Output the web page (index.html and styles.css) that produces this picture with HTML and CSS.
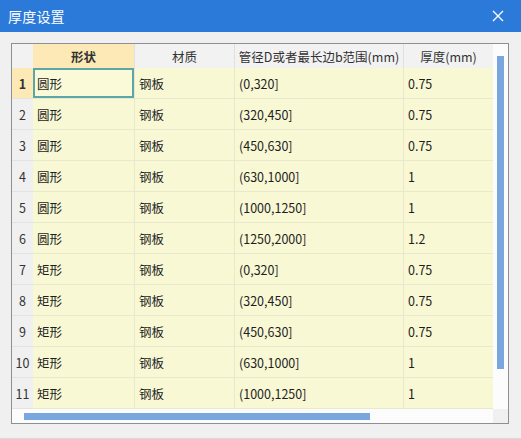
FILE: index.html
```html
<!DOCTYPE html>
<html lang="zh">
<head>
<meta charset="utf-8">
<title>厚度设置</title>
<link rel="stylesheet" href="styles.css">
</head>
<body>
<div class="window">
  <div class="titlebar">
    <span class="title">厚度设置</span>
    <svg class="close" width="12" height="12" viewBox="0 0 12 12"><path d="M1 1L11 11M11 1L1 11" stroke="#fff" stroke-width="1.4" fill="none"/></svg>
  </div>
  <div class="content">
    <div class="frame">
      <div class="main">
        <div class="row head">
          <div class="c rn"></div>
          <div class="c c1 hl bold">形状</div>
          <div class="c c2">材质</div>
          <div class="c c3">管径D或者最长边b范围(mm)</div>
          <div class="c c4">厚度(mm)</div>
        </div>
        <div class="row"><div class="c rn hl bold">1</div><div class="c c1 sel">圆形</div><div class="c c2">钢板</div><div class="c c3">(0,320]</div><div class="c c4">0.75</div></div>
        <div class="row"><div class="c rn">2</div><div class="c c1">圆形</div><div class="c c2">钢板</div><div class="c c3">(320,450]</div><div class="c c4">0.75</div></div>
        <div class="row"><div class="c rn">3</div><div class="c c1">圆形</div><div class="c c2">钢板</div><div class="c c3">(450,630]</div><div class="c c4">0.75</div></div>
        <div class="row"><div class="c rn">4</div><div class="c c1">圆形</div><div class="c c2">钢板</div><div class="c c3">(630,1000]</div><div class="c c4">1</div></div>
        <div class="row"><div class="c rn">5</div><div class="c c1">圆形</div><div class="c c2">钢板</div><div class="c c3">(1000,1250]</div><div class="c c4">1</div></div>
        <div class="row"><div class="c rn">6</div><div class="c c1">圆形</div><div class="c c2">钢板</div><div class="c c3">(1250,2000]</div><div class="c c4">1.2</div></div>
        <div class="row"><div class="c rn">7</div><div class="c c1">矩形</div><div class="c c2">钢板</div><div class="c c3">(0,320]</div><div class="c c4">0.75</div></div>
        <div class="row"><div class="c rn">8</div><div class="c c1">矩形</div><div class="c c2">钢板</div><div class="c c3">(320,450]</div><div class="c c4">0.75</div></div>
        <div class="row"><div class="c rn">9</div><div class="c c1">矩形</div><div class="c c2">钢板</div><div class="c c3">(450,630]</div><div class="c c4">0.75</div></div>
        <div class="row"><div class="c rn">10</div><div class="c c1">矩形</div><div class="c c2">钢板</div><div class="c c3">(630,1000]</div><div class="c c4">1</div></div>
        <div class="row"><div class="c rn">11</div><div class="c c1">矩形</div><div class="c c2">钢板</div><div class="c c3">(1000,1250]</div><div class="c c4">1</div></div>
      </div>
      <div class="vscroll"><div class="vthumb"></div></div>
      <div class="hscroll"><div class="hthumb"></div></div>
      <div class="corner"></div>
    </div>
  </div>
</div>
</body>
</html>
```

FILE: styles.css
```css
html, body {
  margin: 0;
  padding: 0;
}
body {
  width: 521px;
  height: 439px;
  background: #f0f0f0;
  font-family: "Microsoft YaHei", "Noto Sans CJK SC", "Noto Sans", sans-serif;
  font-size: 12.5px;
  color: #1e1e1e;
  overflow: hidden;
}
.window {
  width: 521px;
  height: 439px;
  box-sizing: border-box;
  border-bottom: 1px solid #d8d8d8;
}
.titlebar {
  height: 32px;
  background: #2b7ad9;
  display: flex;
  align-items: center;
  justify-content: space-between;
  padding: 0 17px 0 8px;
}
.title {
  color: #fff;
  font-size: 14px;
  letter-spacing: 0.2px;
  margin-top: -1px;
}
.close {
  display: block;
}
.content {
  padding: 11px 12px 0 11px;
}
.frame {
  width: 498px;
  height: 381px;
  box-sizing: border-box;
  border: 1px solid #8c8f94;
  display: grid;
  grid-template-columns: 481px 15px;
  grid-template-rows: 365px 14px;
  background: #fff;
}
.main {
  display: flex;
  flex-direction: column;
  overflow: hidden;
}
.row {
  display: grid;
  grid-template-columns: 21px 102px 100px 169px 89px;
  height: 31px;
}
.row.head {
  height: 24px;
}
.c {
  box-sizing: border-box;
  border-right: 1px solid #e8e8cc;
  border-bottom: 1px solid #e8e8cc;
  background: #f8f8d5;
  display: flex;
  align-items: center;
  padding-left: 4px;
  white-space: nowrap;
  overflow: hidden;
}
.c.c4 {
  border-right: none;
}
.c.rn {
  background: #f0f0f0;
  border-right: none;
  border-bottom: 1px solid #e3e3e3;
  justify-content: center;
  padding-left: 0;
  color: #333;
}
.head .c {
  background: #f2f2f2;
  border-right: 1px solid #e0e0e0;
  border-bottom: none;
  justify-content: center;
  padding-left: 0;
  color: #333;
}
.head .c.rn {
  border-right: none;
}
.head .c.c4 {
  border-right: none;
}
.c.hl,
.head .c.hl {
  background: #fde9b6;
}
.bold {
  font-weight: bold;
  color: #111;
}
.c.sel {
  box-shadow: inset 0 0 0 2px #5aa6a8;
  background: #fafad9;
}
.vscroll {
  background: #fcfcfc;
  display: flex;
  justify-content: center;
  padding-top: 12px;
}
.vthumb {
  width: 7px;
  height: 313px;
  background: #7aa6e0;
}
.hscroll {
  background: #fcfcfc;
  display: flex;
  align-items: center;
  padding-left: 12px;
}
.hthumb {
  width: 346px;
  height: 7px;
  background: #7aa6e0;
}
.corner {
  background: #f0f0f0;
}
```
